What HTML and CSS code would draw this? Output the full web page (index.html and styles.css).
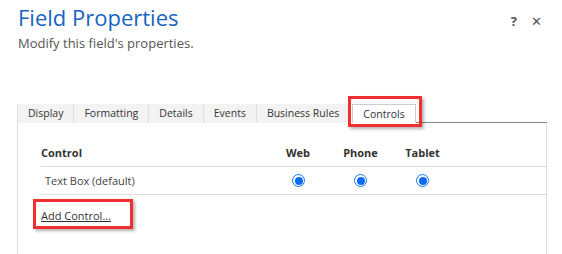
FILE: index.html
```html
<!DOCTYPE html>
<html lang="en">
<head>
    <meta charset="UTF-8">
    <meta name="viewport" content="width=device-width, initial-scale=1.0">
    <title>Field Properties</title>
    <link rel="stylesheet" href="styles.css">
</head>
<body>

    <div class="header">
        <div class="titles">
            <h1>Field Properties</h1>
            <p class="subtitle">Modify this field's properties.</p>
        </div>
        <div class="header-buttons">
            <span class="help">?</span>
            <span class="close">&#x2715;</span>
        </div>
    </div>

    <div class="tabs">
        <span class="tab">Display</span>
        <span class="tab">Formatting</span>
        <span class="tab">Details</span>
        <span class="tab">Events</span>
        <span class="tab">Business Rules</span>
        <span class="tab active">Controls</span>
        <span class="tab-rest"></span>
    </div>

    <div class="panel">
        <div class="grid head">
            <span>Control</span>
            <span class="center">Web</span>
            <span class="center">Phone</span>
            <span class="center">Tablet</span>
            <span></span>
        </div>
        <div class="grid row">
            <span class="name">Text Box (default)</span>
            <span class="center"><span class="radio"></span></span>
            <span class="center"><span class="radio"></span></span>
            <span class="center"><span class="radio"></span></span>
            <span></span>
        </div>
        <div class="add-wrap">
            <a class="add-link">Add Control...</a>
        </div>
    </div>

</body>
</html>
```

FILE: styles.css
```css
* {
    box-sizing: border-box;
    margin: 0;
    padding: 0;
}
body {
    font-family: "Open Sans", "Noto Sans", sans-serif;
    background-color: #fff;
    color: #333;
    width: 562px;
    height: 254px;
    overflow: hidden;
}
.header {
    display: flex;
    justify-content: space-between;
    padding: 1px 18px 0 18px;
}
h1 {
    font-weight: 400;
    font-size: 22px;
    color: #1565c0;
    line-height: 33px;
}
.subtitle {
    font-size: 13px;
    color: #555;
    line-height: 18px;
}
.header-buttons {
    display: flex;
    gap: 14px;
    padding-top: 11px;
    padding-right: 2px;
    font-size: 13px;
    font-weight: 700;
    color: #555;
}
.close {
    font-size: 13px;
    font-weight: 400;
}
.tabs {
    display: flex;
    margin: 52px 0 0 17px;
    width: 530px;
    font-size: 10.5px;
}
.tab {
    background-color: #f3f3f3;
    border-left: 1px solid #ddd;
    padding: 2px 10px 3px 10px;
    line-height: 14px;
    height: 19px;
    color: #333;
}
.tab.active {
    position: relative;
    background-color: #fff;
    border: 1px solid #ccc;
    border-bottom: none;
    margin-left: 3px;
    padding: 2px 10px 3px 10px;
}
.tab.active::after {
    content: "";
    position: absolute;
    left: -5px;
    right: -7px;
    top: -9px;
    bottom: -4px;
    border: 3px solid #f03030;
    box-shadow: 2px 2px 3px rgba(0, 0, 0, 0.3);
}
.tab-rest {
    flex: 1;
    border-bottom: 1px solid #888;
}
.panel {
    margin-left: 17px;
    width: 530px;
    height: 140px;
    border-left: 1px solid #ddd;
    border-right: 1px solid #ddd;
    padding: 16px 0 0 23px;
}
.grid {
    display: grid;
    grid-template-columns: 226px 62px 63px 61px 60px;
    align-items: center;
    height: 28px;
    border-bottom: 1px solid #ddd;
    font-size: 11px;
}
.head {
    font-weight: 700;
    color: #333;
}
.row .name {
    padding-left: 4px;
    color: #444;
}
.center {
    display: flex;
    justify-content: center;
}
.radio {
    width: 13px;
    height: 13px;
    border-radius: 50%;
    border: 1.5px solid #1877f2;
    padding: 1.5px;
    background-clip: content-box;
    background-color: #0a6cf5;
}
.add-wrap {
    display: inline-block;
    margin: 4px 0 0 -8px;
    padding: 1px 19px 1px 5px;
    border: 3px solid #f03030;
    box-shadow: 2px 2px 3px rgba(0, 0, 0, 0.3);
}
.add-link {
    font-size: 11px;
    color: #333;
    text-decoration: underline;
    line-height: 16px;
}
```
